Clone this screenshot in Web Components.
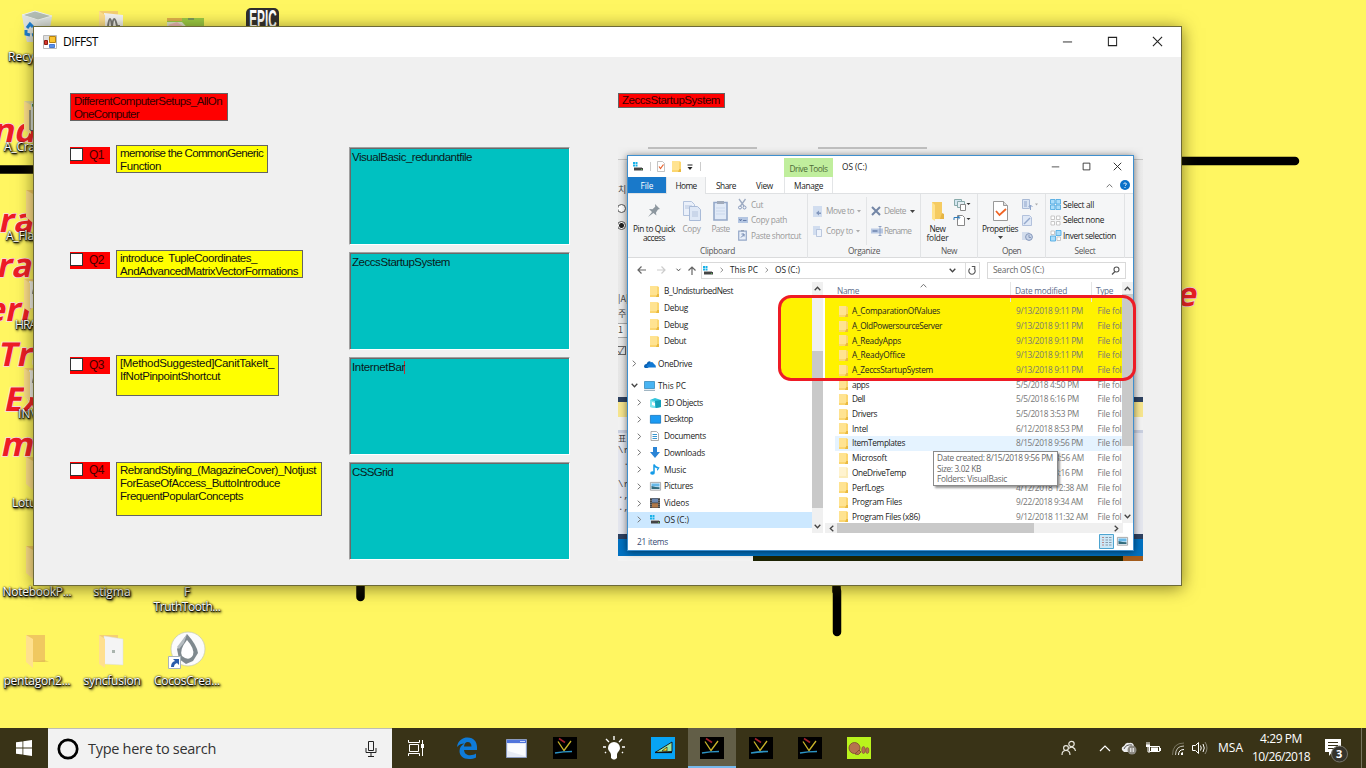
<!DOCTYPE html>
<html lang="en">
<head>
<meta charset="utf-8">
<title>DIFFST</title>
<style>
html,body{margin:0;width:1366px;height:768px;overflow:hidden}
body{font:12px/16px "Open Sans","Noto Sans CJK KR",sans-serif;color:#000}
</style>
</head>
<body>
<desk-shell></desk-shell>
<script>
const ICONS = {
 folder:[22,34,'<path d="M1 1H20V28H8Z" fill="#f0c860"/><path d="M1 1L8 5V34L1 28Z" fill="#ffe08e"/><path d="M8 28L24 28 20 26Z" fill="#d8b850" opacity=".5"/>'],
 folderdoc:[26,34,'<path d="M1 1H20V30H8Z" fill="#f5cf73"/><path d="M6 2L25 5V31L6 30Z" fill="#f4f4f4" stroke="#ddd" stroke-width=".5"/><path d="M1 1L7 5V34L1 30Z" fill="#ffe08e"/><path d="M14 16h3v3h-3z" fill="#aab4ae"/>'],
 folderart:[26,34,'<path d="M1 1H20V30H8Z" fill="#f5cf73"/><path d="M6 3L25 5V31L6 30Z" fill="#f4f4f4"/><path d="M10 16q2-14 4 0q2-14 5 0l3 0" stroke="#777" fill="none" stroke-width="2"/><path d="M1 1L7 5V34L1 30Z" fill="#ffe08e"/>'],
 folderapp:[26,34,'<path d="M1 1H20V30H8Z" fill="#dcd8a0"/><path d="M8 3L25 3V31L8 30Z" fill="#d7e0e6"/><path d="M9 4h4l-4 3z" fill="#3a8a5a"/><path d="M1 1L8 5V34L1 30Z" fill="#ffe08e"/><path d="M7 10v20l3 1" stroke="#334b70" fill="none"/>'],
 recycle:[32,34,'<path d="M1 5L14 1 31 6 27 32 6 32Z" fill="#dde3e5"/><path d="M1 5L14 1 31 6 17 10Z" fill="#b3bdb5" stroke="#eef2ee"/><path d="M1 5L17 10 18 32H6Z" fill="#dfe3e1"/><g fill="none" stroke="#1c7fd4" stroke-width="3"><path d="M6 18l3-4 3 3M14 19l1 5-4 1M9 25l-4-1 0-4"/></g>'],
 greenpic:[40,20,'<path d="M1 1H38V20H1Z" fill="#9bcb45"/><path d="M1 1H16V4H1Z" fill="#e0b04c"/><path d="M1 5H16L30 20H1Z" fill="#dfe8d0"/><path d="M2 8l9-3 7 5-9 3z" fill="#f0b8bb"/><path d="M22 2h6" stroke="#567"/>'],
 cocos:[40,40,'<circle cx="21" cy="18" r="17" fill="#fbfbfb" stroke="#c9cdb0" stroke-width=".8"/><path d="M20 3Q30 14 31 22L26 30 19 33 12 28 10 18Z" fill="#7f898e"/><path d="M20 9Q28 18 26 24Q22 31 15 25Q12 19 20 9Z" fill="#fff"/><path d="M20 3L17 12 12 18 10 16Z" fill="#b5bcc0"/><path d="M1.500 25.500h12v12h-12z" fill="#fff" stroke="#a9b4bb"/><path d="M4 36q0-5 4-6l-2-2h6v6l-2-2q-3 1-3 4z" fill="#2a5caa"/>'],
 form:[14,14,'<path d="M.5 .5h13v13h-13z" fill="#fff" stroke="#b9b9b9"/><path d="M1 5h5V1H1z" fill="#dedede"/><path d="M1.500 5.500h3v4h-3z" fill="#d8352b" stroke="#8c1c14"/><path d="M6.500 1.500h6v6h-6z" fill="#fbc42e" stroke="#b68310"/><path d="M6.500 9.500h5v3h-5z" fill="#5a90ea" stroke="#4a7ad0"/>'],
 min:[12,12,'<path d="M1 6.500h10" stroke="#222"/>'],
 max:[12,12,'<path d="M1.500 1.500h9v9h-9z" fill="none" stroke="#222" stroke-width="1.100"/>'],
 close:[12,12,'<path d="M1 1l10 10M11 1L1 11" stroke="#222" stroke-width="1.200"/>'],
 win:[16,16,'<path d="M0 2.300L6.500 1.400V7.500H0zM7.300 1.300L16 0V7.500H7.300zM0 8.400H6.500V14.600L0 13.700zM7.300 8.400H16V16L7.300 14.700z" fill="#fff"/>'],
 cortana:[22,22,'<circle cx="11" cy="11" r="9.200" fill="none" stroke="#000" stroke-width="2.700"/>'],
 mic:[12,18,'<path d="M3.500 1.500h5v9h-5zM1 8v4.500h10V8M6 13v3.500M3 16.500h6" fill="none" stroke="#222"/>'],
 taskview:[18,16,'<g stroke="#fff" fill="none" stroke-width="1"><path d="M2.500 4.500h9v7h-9zM1.500 0v2.500h11V0M1.500 16v-2.500h11V16M15.500 0v16"/></g><path d="M14 4h3v4h-3z" fill="#fff"/>'],
 edge:[22,22,'<path d="M1 10C2 3 7 .5 11.500 .5C18 .5 21 5 21 10V13H8C8.500 17 11 18.200 14 18.200C16.500 18.200 18.500 17.500 20 16.500V20.500C18 21.600 15.500 22 13 22C7 22 3.500 18.500 3.500 14C3.500 10.500 5.500 8 8.500 6.500C5.500 6.500 3 7.500 1 10ZM8 9.500H15.500C15.500 6.500 14 5 11.800 5C9.500 5 8.300 7 8 9.500Z" fill="#0f7bd8"/>'],
 appwin:[21,19,'<path d="M.5 .5h20v18h-20z" fill="#e6ebf6" stroke="#8b9bc0"/><path d="M1 1h19v3H1z" fill="#4f74dc"/><path d="M14 2h5v1h-5z" fill="#cdd8fa"/><path d="M2 5h17v12L2 12z" fill="#fafcff"/>'],
 vee:[24,22,'<path d="M0 0h24v22H0z" fill="#000"/><path d="M5 4.500l6 9 7-9.500" stroke="#c9b32a" stroke-width="1.300" fill="none"/><path d="M6 1.500l6 4" stroke="#a5202b" stroke-width="1.600"/><path d="M2 16q8-1.500 17-1.500" stroke="#2d93c4" stroke-width="1.700" fill="none"/>'],
 bulb:[22,24,'<path d="M11 6a6 6 0 0 1 6 6c0 3-3 4-3 7v3l-2 1.500H10L8 22v-3c0-3-3-4-3-7a6 6 0 0 1 6-6z" fill="#fff"/><path d="M11 0v4M3 3l3 3M19 3l-3 3M0 11h3M22 11h-3M3 16l-1 1M19 16l1 1" stroke="#fff" stroke-width="1.400"/>'],
 sail:[24,22,'<path d="M0 0h24v22H0z" fill="#08a4f4"/><path d="M4 15.500L21 5V14.500Z" fill="#9ae6a6" stroke="#111" stroke-width=".9"/><path d="M11 14l5-4v4z" fill="#ffdf20" stroke="#222" stroke-width=".7"/><path d="M4 15.500h17" stroke="#111" stroke-width="1.200"/>'],
 potato:[24,22,'<path d="M0 0h24v22H0z" fill="#b9f31c"/><circle cx="7.500" cy="11" r="5.500" fill="#b5734f" stroke="#7c4830" stroke-width=".8"/><path d="M8 17q4 2 6-2l-2-2z" fill="#b5734f" stroke="#7c4830" stroke-width=".8"/><ellipse cx="16.500" cy="13" rx="1.800" ry="3.500" fill="#b5734f" stroke="#7c4830" stroke-width=".6"/><ellipse cx="20.300" cy="13.500" rx="1.600" ry="3" fill="#b5734f" stroke="#7c4830" stroke-width=".6"/>'],
 people:[16,16,'<g fill="none" stroke="#e8e6dc" stroke-width="1.200"><circle cx="10.500" cy="4" r="2.700"/><circle cx="5" cy="8" r="2.400"/><path d="M1 15c0-6 8-6 8 0M8 8.500c2-2.500 6-1.500 6.500 2.500"/></g>'],
 up:[12,8,'<path d="M1 7l5-5 5 5" stroke="#fff" fill="none" stroke-width="1.200"/>'],
 cloud:[16,14,'<path d="M1 9q-1-3 2-4Q5 1 8 2q4-1 5 3l-3 6H3z" fill="#eee"/><path d="M3 8q2-5 8-4" stroke="#555" fill="none"/><circle cx="11" cy="9" r="4.500" fill="#8d8a83"/><path d="M9.800 7v4M12.200 7v4" stroke="#fff"/>'],
 battery:[16,12,'<path d="M4.500 4.500h10v5h-10zM1 3h4M2 0v3M4 0v3M3 3v7h2" stroke="#fff" fill="none"/><path d="M6 5.500h7v3.500H6zM15 6h1v3h-1zM1 3h4v2H1z" fill="#fff"/>'],
 wifi:[12,13,'<g fill="none" stroke="#c9c7bd"><path d="M.5 13Q.5 1 12 1" stroke="#77735f"/><path d="M3.500 13Q3.500 4 12 4"/><path d="M6.500 13Q6.500 7.500 12 7.500" stroke="#fff"/></g><path d="M9 13v-2l2-1v3z" fill="#fff"/>'],
 sound:[16,14,'<g stroke="#fff" fill="none"><path d="M.5 4.500h3l3-3v11l-3-3h-3zM8.500 4.500q1.500 2.500 0 5M11 3q2.500 4 0 8"/><path d="M13 1q4 6 0 12" stroke="#8b887a"/></g>'],
 action:[24,25,'<path d="M1 1h16v13h-9l-3 4v-4H1z" fill="#fff"/><path d="M4 4.500h10M4 7.500h10M4 10.500h7" stroke="#38321a"/><circle cx="15.500" cy="16" r="8" fill="#36342c" stroke="#77756b"/>'],
 drive:[10,9,'<path d="M0 0h2v2H0zM2.500 0h2v2h-2zM0 2.500h2v2H0zM2.500 2.500h2v2h-2z" fill="#18b1e8"/><path d="M1 5h8v1H1z" fill="#aaa"/><path d="M1 6h9v2.500H1z" fill="#444"/><path d="M8 7h1v.8h-1z" fill="#5d5"/>'],
 check:[8,11,'<path d="M.5 .5h5l2 2v8h-7z" fill="#fff" stroke="#aaa" stroke-width=".7"/><path d="M2 5.500l1.500 2 3-4" stroke="#e8612c" fill="none" stroke-width="1.200"/>'],
 sfolder:[9,11,'<path d="M0 0h7l2 1v10H0z" fill="#fbd670"/><path d="M0 0h7v9H0z" fill="#ffe391"/><path d="M7.300 8h1.700v3H6z" fill="#e9b93f"/>'],
 pfolder:[9,11,'<path d="M0 0h7l2 1v10H0z" fill="#fbecb9"/><path d="M0 0h7v9H0z" fill="#fff3cf"/>'],
 pin:[14,15,'<path d="M8 1l5 5-2 .5-2 3 .4 3-3-2.500L1 14l4-5-3-3 3.500 .2 2.700-2.500z" fill="#8d979f"/>'],
 copy:[18,20,'<path d="M.5 .5h8l3 3v11h-11z" fill="#eaf0fa" stroke="#b3c3dd"/><path d="M6.500 5.500h8l3 3v11h-11z" fill="#dfe8f6" stroke="#a9bbd8"/><path d="M2 5h7M2 7h5M9 11h6M9 13h6M9 15h6" stroke="#a9bbd8" stroke-width=".8"/>'],
 paste:[15,21,'<path d="M1 2.500h13v17.500H1z" fill="#e1eaf7" stroke="#94a8c9" stroke-width="1.600"/><path d="M4 1h7v3H4z" fill="#a1abbb"/><path d="M3 8h9M3 11h9M3 14h9" stroke="#c3d1e6" stroke-width=".7"/>'],
 cut:[9,11,'<path d="M1 0l5 7M7.500 0l-5 7" stroke="#9eabc2" stroke-width="1.300"/><circle cx="2" cy="8.500" r="1.500" fill="none" stroke="#8598bb"/><circle cx="6.500" cy="8.500" r="1.500" fill="none" stroke="#8598bb"/>'],
 cpath:[10,6,'<path d="M0 0h10v6H0z" fill="#b4c6e2"/><path d="M1.500 2l1 2 1-2M5 3.500h3.500" stroke="#506a9a" stroke-width=".8" fill="none"/>'],
 pshort:[9,11,'<path d="M.7 1.200h7.600v9H.7z" fill="#e8eff9" stroke="#95a8c8" stroke-width="1.200"/><path d="M3 7.500l3-3M3.500 4H6v2.500" stroke="#6c83ac" fill="none"/><path d="M3 0h3v1.500H3z" fill="#95a3b8"/>'],
 moveto:[9,11,'<path d="M0 0h9v11H0z" fill="#d1ddef"/><path d="M3 7l3-2.500v5zM6 6.500h2v1.500H6z" fill="#8297bd"/>'],
 copyto:[9,11,'<path d="M0 0h7v9H0z" fill="#d1ddef"/><path d="M3.500 3.500h5v7h-5z" fill="#eef3fb" stroke="#a4b5d3" stroke-width=".7"/>'],
 del:[10,10,'<path d="M1 1l8 8M9 1L1 9" stroke="#7386a6" stroke-width="2"/>'],
 rename:[12,10,'<path d="M0 2.500h12v5H0z" fill="#b9c9e3"/><path d="M1.500 4h5v2h-5z" fill="#8095bb"/><path d="M9 0v10M7.500 .5h3M7.500 9.500h3" stroke="#8095bb" stroke-width=".8"/>'],
 bigfolder:[14,20,'<path d="M1 1h10v17H1z" fill="#f5cb61"/><path d="M1 1l3 3v16l-3-2z" fill="#ffe28c"/><path d="M11 12l2 1v5h-4z" fill="#e6b544"/>'],
 newitem:[16,12,'<path d="M.5 .5h7v6h-7z" fill="#d4e6f1" stroke="#8aa"/><path d="M3.500 2.500h7v6h-7z" fill="#e4eef4" stroke="#8aa"/><path d="M6.500 5.500h5v6h-5z" fill="#fff" stroke="#888"/><path d="M12.500 4h4l-2 2z" fill="#333"/>'],
 easy:[16,12,'<path d="M3.500 1.500h5l2 2v8h-7z" fill="#fff" stroke="#888"/><path d="M0 6V3.500h5M4 2l2 1.500-2 2" fill="none" stroke="#2c79b8"/><path d="M12.500 4h4l-2 2z" fill="#333"/>'],
 props:[15,20,'<path d="M.5 .5h10l4 4v15H.5z" fill="#fff" stroke="#999"/><path d="M10.500 .5v4h4" fill="#ddd" stroke="#999"/><path d="M3 10l3.500 4L13 8" stroke="#f06424" stroke-width="1.800" fill="none"/>'],
 open:[16,11,'<path d="M.5 .5h7v9h-7z" fill="#d9e4f3" stroke="#a9bad6"/><path d="M2 3h3M2 5h3M2 7h3M8.500 11V6M6.500 8l2-2 2 2" stroke="#8ea4cb" fill="none"/><path d="M13 4.500h3l-1.500 2z" fill="#aaa"/>'],
 edit:[10,11,'<path d="M.5 .5h7l2 2v8h-9z" fill="#dfe8f6" stroke="#b2c1dc"/><path d="M2 9l6-6" stroke="#94a8cc" stroke-width="1.500"/>'],
 history:[11,11,'<path d="M0 2h7l1 2v6H0z" fill="#d3ddec"/><circle cx="7" cy="7" r="3.400" fill="#c8d4e8" stroke="#8598bb"/><path d="M7 5v2.500h2" stroke="#8598bb" fill="none"/>'],
 selall:[11,11,'<g fill="#aadcfa" stroke="#44a4df" stroke-width=".8"><path d="M.5 .5h4.500v4.500H.5zM6 .5h4.500v4.500H6zM.5 6h4.500v4.500H.5zM6 6h4.500v4.500H6z"/></g>'],
 selnone:[11,11,'<g fill="#fff" stroke="#bbb" stroke-width=".8"><path d="M1 1h3.500v3.500H1zM6.500 1h3.500v3.500H6.500zM1 6.500h3.500v3.500H1zM6.500 6.500h3.500v3.500H6.500z"/></g>'],
 selinv:[12,12,'<path d="M6 .5h5v5H6zM.5 6h5v5h-5z" fill="#aadcfa" stroke="#44a4df" stroke-width=".8"/><path d="M1 1h3.500v3.500H1zM7 7h3.500v3.500H7z" fill="#fff" stroke="#bbb" stroke-width=".8"/>'],
 help:[10,10,'<circle cx="5" cy="5" r="5" fill="#0b72c9"/><path d="M3.500 3.700q1.500-1.700 3 0q0 1-1.500 2M5 7v1" stroke="#fff" fill="none" stroke-width=".9"/>'],
 cup:[7,5,'<path d="M.7 4.300l2.800-3 2.800 3" stroke="#777" fill="none"/>'],
 cups:[7,5,'<path d="M.7 4.300l2.800-3 2.800 3" stroke="#444" fill="none" stroke-width="1.300"/>'],
 cdn:[7,5,'<path d="M.7 .7l2.800 3 2.800-3" stroke="#444" fill="none" stroke-width="1.300"/>'],
 crt:[5,7,'<path d="M.7 .7l3 2.800-3 2.800" stroke="#777" fill="none"/>'],
 clf:[5,7,'<path d="M4.300 .7l-3 2.800 3 2.800" stroke="#444" fill="none" stroke-width="1.300"/>'],
 crs:[5,7,'<path d="M.7 .7l3 2.800-3 2.800" stroke="#444" fill="none" stroke-width="1.300"/>'],
 tri:[5,3,'<path d="M0 0h5l-2.500 3z" fill="#444"/>'],
 trig:[4,3,'<path d="M0 0h4l-2 2.500z" fill="#aaa"/>'],
 qa:[6,6,'<path d="M.5 1h5" stroke="#222"/><path d="M.5 3h5l-2.500 3z" fill="#222"/>'],
 back:[9,8,'<path d="M9 4H1M4.500 .5L1 4l3.500 3.500" stroke="#666" fill="none" stroke-width="1.200"/>'],
 fwd:[9,8,'<path d="M0 4h8M4.500 .5L8 4 4.500 7.500" stroke="#ccc" fill="none" stroke-width="1.200"/>'],
 upa:[8,9,'<path d="M4 9V1M.5 4.500L4 1l3.500 3.500" stroke="#666" fill="none" stroke-width="1.200"/>'],
 refresh:[8,9,'<path d="M2 2.500a3.200 3.200 0 1 0 4 0M3.800 .5h3v3" stroke="#555" fill="none" stroke-width="1.100"/>'],
 lens:[9,9,'<circle cx="5.500" cy="3.500" r="2.500" fill="none" stroke="#555" stroke-width="1.100"/><path d="M4 5.500L1 8.500" stroke="#555" stroke-width="1.300"/>'],
 onedrive:[12,8,'<path d="M0 7q0-3 2.500-3Q4 0 7 2l-3 6H1z" fill="#0a62b5"/><path d="M3 7.500q-1-3 2-3.500Q8 0 10 4q2 .5 2 3.500z" fill="#1179d4"/>'],
 pc:[11,10,'<path d="M.5 .5h10v7H.5z" fill="#49b4f2" stroke="#2880b5" stroke-width=".7"/><path d="M0 9.300h11" stroke="#8aa4b5"/>'],
 obj:[11,10,'<path d="M0 2l5-2 6 2v7l-5 1-6-1z" fill="#31c5dc"/><path d="M0 2l5 1v7l-5-1z" fill="#7fe5ef"/><path d="M5 3l6-1v7l-5 1z" fill="#139fb8"/><path d="M2 4l3 1v3l-3-1z" fill="#fff"/>'],
 desk:[11,9,'<path d="M.4 .4h10.200v7.800H.4z" fill="#1c9bf3" stroke="#1373bd" stroke-width=".8"/>'],
 docs:[9,10,'<path d="M1 .5h5.500l2 2v7H1z" fill="#fff" stroke="#999" stroke-width=".8"/><path d="M2.500 3.500H7M2.500 5.500H7M2.500 7.500H7" stroke="#3996cf"/>'],
 down:[10,11,'<path d="M3 0h4v5h3L5 11 0 5h3z" fill="#2a84d6"/>'],
 music:[9,11,'<path d="M4 8.500V.5q1 3 4.500 3.500-1 2-1.500 2" stroke="#149be8" fill="none" stroke-width="1.500"/><ellipse cx="2.500" cy="9" rx="2.300" ry="1.800" fill="#149be8"/>'],
 pics:[11,9,'<path d="M.4 .4h10.200v7.800H.4z" fill="#e9f3fa" stroke="#999" stroke-width=".8"/><path d="M1.500 1.500h8v3h-8z" fill="#68b9e8"/><path d="M1.500 4l4 1 4 .3V7h-8z" fill="#326b7c"/>'],
 vids:[10,10,'<path d="M0 0h10v10H0z" fill="#444"/><path d="M2 .5h6v4H2z" fill="#6d88b0"/><path d="M2 5.300h6v4.200H2z" fill="#b07848"/><path d="M1 0v10M9 0v10" stroke="#aaa" stroke-width=".8" stroke-dasharray="1 1"/>'],
 details:[15,15,'<path d="M.5 .5h14v14H.5z" fill="#cce8f7" stroke="#4da4d0"/><path d="M3 3.500h2M3 6h2M3 8.500h2M3 11h2" stroke="#b88"/><path d="M6.500 3.500h2.500M10 3.500h2.500M6.500 6h2.500M10 6h2.500M6.500 8.500h2.500M10 8.500h2.500M6.500 11h2.500M10 11h2.500" stroke="#89a"/>'],
};
const T=(w,t)=>`<fit-text w="${w}">${t}</fit-text>`;
const I=(n,w,h)=>`<svg-icon name="${n}"${w?` w="${w}" h="${h}"`:''}></svg-icon>`;
function comp(name,css,html){
  customElements.define(name,class extends HTMLElement{
    connectedCallback(){
      if(this.shadowRoot)return;
      const r=this.attachShadow({mode:'open'});
      r.innerHTML=`<style>*{box-sizing:border-box}${css}</style>`+(typeof html==='function'?html(this):html);
    }
  });
}
comp('svg-icon',':host{display:inline-flex;flex:none}svg{display:block;overflow:visible}',e=>{
  const[a,b,p]=ICONS[e.getAttribute('name')];
  return `<svg width="${e.getAttribute('w')||a}" height="${e.getAttribute('h')||b}" viewBox="0 0 ${a} ${b}">${p}</svg>`;
});

/* Form controls */
comp('name-tag',`:host{display:block;border:1px solid #646464;background:var(--bg,#ff0);padding:1px 0 0 3px;font:11.500px/13px "Liberation Sans",sans-serif;color:#111;overflow:hidden}`,'<slot></slot>');
comp('check-tag',`:host{display:flex;align-items:flex-start;width:40px;height:17px;background:#f00;padding-top:1px;font:12px/15px "Liberation Sans",sans-serif;color:#400}
i{width:13px;height:13px;background:#fff;border:1px solid #333;margin-right:6px}`,e=>`<i></i>${T(15,e.getAttribute('label'))}`);
comp('rich-box',`:host{display:block;width:221px;height:98px;background:#00c1c1;border:1px solid #a0a0a0;border-right-color:#fff;border-bottom-color:#fff;box-shadow:inset 1px 1px #696969;padding:3px 0 0 2px;font:11.500px/13px "Liberation Sans",sans-serif;color:#0a1a1a}
:host([caret]) fit-text{border-right:1px solid #b33}`,e=>T(e.getAttribute('w'),e.getAttribute('text')));

/* Explorer pieces */
comp('tree-item',`:host{display:flex;align-items:center;height:16.750px;flex:none;padding-left:var(--pad,9px)}
:host([sel]){background:#cce8ff}
.c{width:var(--cw,13px);display:flex}.i{width:var(--iw,14px);display:flex}`,e=>{
  const c=e.getAttribute('chev')||'';
  return `<span class="c">${c?I(c):''}</span><span class="i">${I(e.getAttribute('icon'))}</span>${T(e.getAttribute('w'),e.getAttribute('label'))}`;
});
comp('file-row',`:host{display:flex;align-items:center;height:14.680px;flex:none;padding-left:13.500px;margin-left:0;overflow:hidden}
:host([hov]){background:linear-gradient(90deg,transparent 10px,#e5f3ff 10px)}
.n{width:164px}.i{width:13.500px;display:flex}.d{width:81.500px;color:#777}.t{color:#777}`,e=>{
  const g=k=>e.getAttribute(k);
  return `<span class="i">${I(g('icon')||'sfolder')}</span><span class="n">${T(g('w'),g('label'))}</span><span class="d">${T(g('dw'),g('date'))}</span><span class="t">${T(24,'File fol')}</span>`;
});
comp('ribbon-group',`:host{display:flex;flex-direction:column;height:64px;border-right:1px solid #e1e3e5;width:var(--w);flex:none;box-sizing:border-box}
.b{flex:1;display:flex;padding-top:3px;overflow:hidden}.l{height:13px;line-height:11px;text-align:center;color:#555}`,e=>`<div class="b"><slot></slot></div><div class="l">${T(e.getAttribute('lw'),e.getAttribute('label'))}</div>`);
comp('big-button',`:host{display:flex;flex-direction:column;align-items:center;width:var(--w);line-height:9px;flex:none}
.i{height:27px;display:flex;align-items:center;margin-bottom:0}`,e=>`<span class="i">${I(e.getAttribute('icon'))}</span><slot></slot>`);
comp('small-list',`:host{display:flex;flex-direction:column;width:var(--w);flex:none;padding-top:var(--pt,0px);box-sizing:border-box}
div{height:var(--rh,15.500px);display:flex;align-items:center;gap:2px}.i{width:var(--iw,11px);display:flex}.x{display:flex;margin-left:var(--xg,2px)}`,e=>
  e.getAttribute('rows').split(';').map(r=>{const[i,t,w,x]=r.split('|');return `<div><span class="i">${I(i)}</span>${t?T(w,t):''}${x?`<span class="x">${I(x)}</span>`:''}</div>`}).join(''));

const tree=[['','sfolder','B_UndisturbedNest',69],['','sfolder','Debug',24],['','sfolder','Debug',24],['','sfolder','Debut',22]];
const sub=[['obj','3D Objects',39],['desk','Desktop',29],['docs','Documents',42],['down','Downloads',41],['music','Music',22],['pics','Pictures',29],['vids','Videos',25],['drive','OS (C:)',25]];
const files=[['A_ComparationOfValues',88,'9/13/2018 9:11 PM',67],['A_OldPowersourceServer',90,'9/13/2018 9:11 PM',67],['A_ReadyApps',49,'9/13/2018 9:11 PM',67],['A_ReadyOffice',53,'9/13/2018 9:11 PM',67],['A_ZeccsStartupSystem',81,'9/13/2018 9:11 PM',67],['apps',17,'5/5/2018 4:50 PM',63],['Dell',13,'5/5/2018 6:16 PM',63],['Drivers',25,'5/5/2018 3:53 PM',63],['Intel',16,'6/12/2018 8:53 PM',67],['ItemTemplates',53,'8/15/2018 9:56 PM',67],['Microsoft',35,'8/15/2018 8:56 AM',68],['OneDriveTemp',54,'5/14/2018 3:16 PM',67],['PerfLogs',32,'4/12/2018 12:38 AM',72],['Program Files',50,'9/22/2018 9:34 AM',67],['Program Files (x86)',68,'9/12/2018 11:32 AM',72]];
comp('file-explorer',`:host{display:flex;flex-direction:column;width:507px;height:396px;background:#fff;border:1px solid #3f8fce;box-shadow:0 1px 7px rgba(0,0,0,.55);font:8.300px/12px "Open Sans",sans-serif;color:#222;box-sizing:border-box}
.title{display:flex;height:21px;align-items:center;flex:none}
.title .q{display:flex;align-items:center;width:156px;padding-left:5px}
.title .q>*{margin-right:6.500px}.q u{width:1px;height:9px;background:#ccc}
.dt{align-self:flex-end;width:49px;height:19px;line-height:21px;background:#c0ee9d;color:#4d6b38;text-align:center}
.cap{margin-left:9px;width:208.500px}.wb{display:flex;gap:22px}
.tabs{display:flex;height:17px;line-height:17px;flex:none;text-align:center;border-bottom:1px solid #dfe1e3;align-items:stretch}
.file{width:38px;background:#1979ca;color:#fff}.home{width:40px;background:#f5f6f7;border:1px solid #e0e2e4;border-width:0 1px;margin-bottom:-1px;height:17px}
.sh{width:40px}.vw{width:37px;}.mg{width:49px;border:1px solid #e3e5e7;border-width:0 1px;margin-left:1px}.hp{margin-left:auto;display:flex;align-items:center;gap:7px;padding-right:3px}
.ribbon{display:flex;height:64px;background:#f5f6f7;border-bottom:1px solid #dadbdc;flex:none}
.g{color:#999}
.addr{display:flex;height:24px;align-items:center;flex:none;padding-left:9px}
.nav{display:flex;align-items:center;width:64px;gap:11px}.nav>:nth-child(n+3){margin-left:-1px}.nav>:nth-child(4){margin-left:-4px}
.ab{width:279px;height:17px;border:1px solid #d9d9d9;display:flex;align-items:center;padding-left:1px;gap:6.500px}
.ab b{margin-left:auto;width:18px;height:15px;border-right:1px solid #ddd;display:flex;align-items:center;justify-content:center}
.ab svg-icon:last-child{margin-right:3px;margin-left:-4px}
.sb{width:139px;height:17px;border:1px solid #d9d9d9;margin-left:7px;display:flex;align-items:center;justify-content:space-between;padding:0 5px;color:#666}
.body{display:flex;height:251px;flex:none}
.tree{width:184px;padding-top:.8px;position:relative;z-index:0;display:flex;flex-direction:column}
.hl{position:absolute;z-index:-1;background:#fff200}
.vs{background:#f0f0f0;display:flex;flex-direction:column;align-items:center;justify-content:space-between;padding:4px 0;width:11px;position:relative}
.vs i{position:absolute;left:0;right:0;background:#c9c9c9}
.list{flex:1;display:flex;flex-direction:column;margin-left:2px;position:relative;z-index:0;min-width:0}
.head{display:flex;height:22.300px;color:#5c6c8c;flex:none;align-items:flex-start;line-height:18px;margin-bottom:-.2px}
.head span{width:179px;padding-left:12px;display:flex}.head span svg-icon{margin:1px 0 0 61px}.head em{width:82px;border:1px solid #e5e5e5;border-width:0 1px;font-style:normal;padding-left:4px;margin-left:6px;height:20px}.head s{text-decoration:none;padding-left:4px}
.rows{display:flex;overflow:hidden;flex:1}.fr{width:298px;overflow:hidden}
.hs{height:10px;background:#f0f0f0;display:flex;align-items:center;justify-content:space-between;padding:0 4px;position:relative;width:298px}
.hs i{position:absolute;left:12px;width:197px;top:0;bottom:0;background:#c9c9c9}
.st{flex:1;display:flex;align-items:center;padding:0 5px 0 9px;color:#344b73}.st p{margin:0 auto 0 0}.st svg-icon+svg-icon{margin-left:3px}
.tip{position:absolute;left:305px;top:295px;width:125px;height:35px;background:#fff;border:1px solid #8a8a8a;box-shadow:2px 2px 2px rgba(0,0,0,.4);padding:1px 3px;color:#666;line-height:10.500px}
.tip fit-text{display:block}`,()=>`
<div class="title"><div class="q">${I('drive')}<u></u>${I('check')}${I('sfolder')}${I('qa')}<u></u></div><div class="dt">${T(38,'Drive Tools')}</div><div class="cap">${T(25,'OS (C:)')}</div><div class="wb">${I('min',9,9)}${I('max',9,9)}${I('close',9,9)}</div></div>
<div class="tabs"><div class="file">${T(13,'File')}</div><div class="home">${T(21,'Home')}</div><div class="sh">${T(20,'Share')}</div><div class="vw">${T(17,'View')}</div><div class="mg">${T(29,'Manage')}</div><div class="hp">${I('cup')}${I('help')}</div></div>
<div class="ribbon">
<ribbon-group label="Clipboard" lw="35" style="--w:180px"><big-button icon="pin" style="--w:52px">${T(42,'Pin to Quick')}${T(22,'access')}</big-button><big-button class="g" icon="copy" style="--w:23px">${T(18,'Copy')}</big-button><big-button class="g" icon="paste" style="--w:35px">${T(18,'Paste')}</big-button><small-list class="g" style="--w:68px" rows="cut|Cut|12;cpath|Copy path|36;pshort|Paste shortcut|50"></small-list></ribbon-group>
<ribbon-group label="Organize" lw="32" style="--w:113px"><small-list class="g" style="--w:58px;--rh:20px;--pt:4px;--xg:1px;padding-left:5px" rows="moveto|Move to|28|trig;copyto|Copy to|27|trig"></small-list><small-list class="g" style="--w:54px;--rh:20px;--pt:4px;border-left:1px solid #e3e5e7;padding-left:4px" rows="del|Delete|22|tri;rename|Rename|27"></small-list></ribbon-group>
<ribbon-group label="New" lw="16" style="--w:57px"><big-button icon="bigfolder" style="--w:33px">${T(16,'New')}${T(22,'folder')}</big-button><small-list style="--w:20px;" rows="newitem;easy"></small-list></ribbon-group>
<ribbon-group label="Open" lw="19" style="--w:68px"><big-button icon="props" style="--w:44px">${T(36,'Properties')}<span style="line-height:5px">${I('tri')}</span></big-button><small-list style="--w:20px" rows="open;edit;history"></small-list></ribbon-group>
<ribbon-group label="Select" lw="21" style="--w:79px"><small-list style="--w:76px;padding-left:4px" rows="selall|Select all|31;selnone|Select none|41;selinv|Invert selection|53"></small-list></ribbon-group>
</div>
<div class="addr"><div class="nav">${I('back')}${I('fwd')}${I('cdn',5,4)}${I('upa')}</div><div class="ab">${I('drive')}${I('crt',4,6)}${T(28,'This PC')}${I('crt',4,6)}${T(25,'OS (C:)')}<b>${I('cdn')}</b>${I('refresh')}</div><div class="sb">${T(51,'Search OS (C:)')}${I('lens')}</div></div>
<div class="body"><div class="tree"><div class="hl" style="left:152px;right:0;top:14px;height:83px;border-radius:13px 0 0 13px"></div>
${tree.map(a=>`<tree-item icon="${a[1]}" label="${a[2]}" w="${a[3]}"></tree-item>`).join('')}
<tree-item style="margin-top:5.500px;--pad:4px;--cw:12px" chev="crt" icon="onedrive" label="OneDrive" w="34"></tree-item>
<tree-item style="margin-top:5.500px;--pad:3px;--cw:13px" chev="cdn" icon="pc" label="This PC" w="28"></tree-item>
${sub.map((a,i)=>`<tree-item chev="crt" icon="${a[0]}" label="${a[1]}" w="${a[2]}"${i==7?' sel':''}></tree-item>`).join('')}
</div><div class="vs">${I('cups')}<i style="top:69px;height:157px"></i>${I('cdn')}</div>
<div class="list"><div class="hl" style="left:0;top:14px;width:297px;height:83px"></div>
<div class="rows"><div class="fr"><div class="head"><span>${T(22,'Name')}${I('cup')}</span><em>${T(52,'Date modified')}</em><s>${T(17,'Type')}</s></div>${files.map((f,i)=>`<file-row label="${f[0]}" w="${f[1]}" date="${f[2]}" dw="${f[3]}"${i==9?' hov':''}${i==11?' icon="pfolder"':''}></file-row>`).join('')}</div><div class="vs">${I('cups')}<i style="top:12px;height:152px"></i>${I('cdn')}</div></div>
<div class="hs">${I('clf')}<i></i>${I('crs')}</div></div></div>
<div class="st"><p>${T(31,'21 items')}</p>${I('details')}${I('pics')}</div>
<div class="tip">${T(116,'Date created: 8/15/2018 9:56 PM')}${T(44,'Size: 3.02 KB')}${T(70,'Folders: VisualBasic')}</div>`);

comp('picture-box',`:host{display:block;position:relative;width:525px;height:414px;overflow:hidden;background:#efefef;font:9px/12px "Noto Sans CJK KR",sans-serif;color:#444}
.bg{display:flex;flex-direction:column;height:100%}
.bg>*{flex:none}
.top{display:flex;gap:61px;padding-left:30px;height:12px;background:#efefef}.top i{width:109px;height:2px;background:#bfbfbf}
.a{height:238px;background:linear-gradient(#ececec,#e6e6e6);border-top:1px solid #c5c5c5;display:flex;flex-direction:column;overflow:hidden}
.navy{height:5px;background:#2e4160}.yl{height:15px;background:#f6e58e}.wh{height:13px;background:#f2f2f2}.bl{height:3px;background:#c9cfdf}.c{height:101px;background:#e4e6ee;font-family:"Liberation Mono","Noto Sans CJK KR",monospace;line-height:11.300px;white-space:pre;padding-top:2px;overflow:hidden}
.blue{height:17px;background:#0071c1}.bot{flex:1;display:flex}.bot i:nth-child(1){width:135px;background:#f3f3f3}.bot i:nth-child(2){width:370px;background:#1e2404}.bot i:nth-child(3){width:20px;background:#a45c1c}
.r{width:9px;height:9px;border:1px solid #555;border-radius:50%;margin:0 0 8px -1px;background:#fff}
.k{background:radial-gradient(#222 0 2px,#fff 3px)}
.box{width:12px;height:15px;border:1px solid #aaa;border-left:0;background:#f5f5f5}
.cb{width:8px;height:9px;border:1px solid #666;margin-top:8px;border-left:0;line-height:8px}
file-explorer{position:absolute;left:9px;top:8px}
.ring{position:absolute;left:160px;top:148px;width:358px;height:86px;border:3px solid #ee1c25;border-radius:13px}`,`
<div class="bg"><div class="top"><i></i><i></i></div><div class="a"><div style="height:44px;padding-top:24px;width:9px;overflow:hidden">치</div><i class="r"></i><i class="r k"></i><div style="margin-top:55px">|A|</div><div style="width:9px;overflow:hidden;height:18px;padding-top:3px">주</div><div class="box">1</div><div class="cb">✓</div></div><div class="navy"></div><div class="yl"></div><div class="wh"></div><div class="bl"></div><div class="c">표
\\re
 ..

\\re
.,
.,</div><div class="navy"></div><div class="blue"></div><div class="bot"><i></i><i></i><i></i></div></div>
<file-explorer></file-explorer><div class="ring"></div>`);

/* DIFFST window */
comp('form-window',`:host{display:flex;flex-direction:column;background:#f0f0f0;border:1px solid #6d6a38;box-shadow:0 2px 16px rgba(50,45,0,.6);box-sizing:border-box}
.bar{display:flex;align-items:center;height:30px;background:#fff;padding:0 18px 1px 9px;flex:none}.bar fit-text{margin-left:6px}
.wb{margin-left:auto;display:flex;gap:34px}
.grid{display:grid;grid-template-columns:279px 269px 525px;grid-template-rows:54px repeat(4,105px);padding:36px 0 0 36px}
.q{display:flex;align-items:flex-start;gap:6px}.pic{grid-area:2/3/6/4}
name-tag{box-sizing:border-box}rich-box{box-sizing:border-box}check-tag{box-sizing:border-box}
name-tag fit-text{display:block}`,`
<div class="bar">${I('form')}${T(35,'DIFFST')}<div class="wb">${I('min',11,11)}${I('max',11,11)}${I('close',11,11)}</div></div>
<div class="grid">
<name-tag style="--bg:#f00;color:#300;width:158px;height:28px">${T(148,'DifferentComputerSetups_AllOn')}${T(65,'OneComputer')}</name-tag><div></div><name-tag style="--bg:#f00;color:#300;width:107px;height:15px;line-height:13px;padding-top:0">${T(98,'ZeccsStartupSystem')}</name-tag>
<div class="q"><check-tag label="Q1"></check-tag><name-tag style="width:152px;height:28px;margin-top:-2px">${T(143,'memorise the CommonGeneric')}${T(41,'Function')}</name-tag></div><rich-box text="VisualBasic_redundantfile" w="120"></rich-box>
<picture-box class="pic"></picture-box>
<div class="q"><check-tag label="Q2"></check-tag><name-tag style="width:187px;height:28px;margin-top:-2px">${T(137,'introduce&nbsp; TupleCoordinates_')}${T(178,'AndAdvancedMatrixVectorFormations')}</name-tag></div><rich-box text="ZeccsStartupSystem" w="98"></rich-box>
<div class="q"><check-tag label="Q3"></check-tag><name-tag style="width:163px;height:41px;margin-top:-2px">${T(154,'[MethodSuggested]CanitTakeIt_')}${T(100,'IfNotPinpointShortcut')}</name-tag></div><rich-box caret text="InternetBar" w="53"></rich-box>
<div class="q"><check-tag label="Q4"></check-tag><name-tag style="width:206px;height:54px">${T(196,'RebrandStyling_(MagazineCover)_Notjust')}${T(160,'ForEaseOfAccess_ButtoIntroduce')}${T(123,'FrequentPopularConcepts')}</name-tag></div><rich-box text="CSSGrid" w="41"></rich-box>
</div>`);

comp('desk-icon',`:host{position:absolute;width:74px;display:flex;flex-direction:column;align-items:center;color:#fff;text-shadow:0 1px 1px #000,1px 1px 2px #000,1px 2px 3px #000,0 0 2px #000;line-height:15px}
.i{height:39px;display:flex;align-items:flex-start;margin:0 3px 0 0}.i.cocos{margin:-3px 0 3px}.recycle{margin:0}
:host([lx]) fit-text{align-self:flex-start;margin-left:var(--lx)}`,e=>{
  const n=e.getAttribute('icon')||'';
  return `<span class="i ${n}">${n?I(n):''}</span>`+e.getAttribute('label').split(';').filter(Boolean).map(x=>{const[t,w]=x.split('|');return T(w,t)}).join('');
});
comp('epic-tile',`:host{position:absolute;width:33px;height:38px;background:#2f2d2e;border-radius:5px;color:#fff;font:bold 25px/23px "Liberation Sans",sans-serif;text-align:center;overflow:hidden}div{transform:scaleX(.47);width:64px;margin-left:-15.500px}`,'<div>EPIC</div>');

comp('task-bar',`:host{position:absolute;left:0;right:0;bottom:0;height:40px;display:flex;background:#393317;color:#fff}
.s{width:48px;display:flex;align-items:center;justify-content:center}
.se{width:344px;background:#f2f2f2;border-top:1px solid #bdbdb5;display:flex;align-items:center;padding:0 15px 0 9px;color:#333;font-size:14.500px}
.se fit-text{margin-left:9px}.se svg-icon:last-child{margin-left:auto}
.b{width:48px;display:flex;align-items:center;justify-content:center;margin-right:1px}.b.first{margin-right:3px}
.on{background:#625e47;border-bottom:2px solid #76b9ed;padding-top:2px}
.t{margin-left:auto;display:flex;align-items:center;width:305px}
.t>*{flex:none}.clk{width:60px;margin-left:8px;text-align:center;line-height:18px}
.ac{margin-left:13px;position:relative;display:flex;padding-top:4px}.ac b{position:absolute;left:12px;top:12px;font:bold 11px/16px "Open Sans",sans-serif}
.pk{width:1px;height:40px;background:#77745f;margin-left:13px}`,`
<div class="s">${I('win')}</div><div class="se">${I('cortana')}${T(128,'Type here to search')}${I('mic')}</div>
${['taskview','edge','appwin','vee','bulb','sail','vee','vee','vee','potato'].map((n,i)=>`<div class="b${i==6?' on':i==0?' first':''}">${I(n)}</div>`).join('')}
<div class="t">${I('people')}<span style="width:22px"></span>${I('up')}<span style="width:10px"></span>${I('cloud')}<span style="width:8px"></span>${I('battery')}<span style="width:11px"></span>${I('wifi')}<span style="width:8px"></span>${I('sound')}<span style="width:10px"></span>${T(25,'MSA')}<div class="clk">${T(42,'4:29 PM')}<br>${T(58,'10/26/2018')}</div><div class="ac">${I('action')}<b>3</b></div><div class="pk"></div></div>`);

const red=[['nd',-8,142,35],['ra',-2,232,36],['ra',-4,277,36],['ern',-15,321,56],['Tra',-3,366,55],['Ex',3,411,40],['me',0,456,50],['e',1176,306,18]];
const D=(x,y,l,i,lx)=>`<desk-icon style="left:${x}px;top:${y}px${lx?`;--lx:${lx}px" lx`:'"'} label="${l}"${i?` icon="${i}"`:''}></desk-icon>`;
comp('desk-shell',`:host{display:block;position:relative;width:1366px;height:768px;overflow:hidden;background:#fff661}
.w{position:absolute;left:0;top:0}.w text{font:bold 33px "Open Sans",sans-serif;fill:#ee1c25;stroke:#f6d7e8;stroke-width:1.500px;paint-order:stroke}
form-window{position:absolute;left:33px;top:26px;width:1149px;height:560px}
epic-tile{left:246px;top:8px}`,`
<svg class="w" width="1366" height="768"><g stroke="#000" stroke-width="8.500" stroke-linecap="round"><path d="M-5 169.500H50M1150 161H1295M360.500 570V597M836.500 570V591"/><path d="M837 591V632"/></g>${red.map(r=>`<text transform="translate(${r[1]} ${r[2]}) skewX(-12)">${r[0]}</text>`).join('')}</svg>
${D(0,10,'Recy|26','recycle',8)}${D(75,10,'','folderart')}${D(150,17,'','greenpic')}<epic-tile></epic-tile>
${D(0,100,'A_Cra|31','folderapp',4)}${D(0,189,'A_Fla|28','folder',6)}${D(0,278,'HRA|21','folderart',15)}${D(0,367,'INV|20','folderart',18)}${D(0,456,'Lotu|24','folder',12)}
${D(0,545,'NotebookP...|69','folder')}${D(75,545,'stigma|37')}${D(150,545,'F|6;TruthTooth...|67')}
${D(0,634,'pentagon2...|67','folder')}${D(75,634,'syncfusion|57','folderdoc')}${D(150,634,'CocosCrea...|66','cocos')}
<form-window></form-window><task-bar></task-bar>`);

/* Spreads or tightens its tracking so that the label fills exactly w pixels. */
customElements.define('fit-text',class extends HTMLElement{
  connectedCallback(){
    if(this.shadowRoot)return;
    const r=this.attachShadow({mode:'open'});
    r.innerHTML='<style>:host{display:inline-block;white-space:pre;text-align:left;flex:none}span{display:inline-block}</style><span><slot></slot></span>';
    const s=r.querySelector('span'),w=+this.getAttribute('w'),n=this.textContent.length;
    const k=s.getBoundingClientRect().width;
    if(w&&k)s.style.letterSpacing=((w-k)/n)+'px';
    this.style.width=w+'px';
  }
});
</script>
</body>
</html>
